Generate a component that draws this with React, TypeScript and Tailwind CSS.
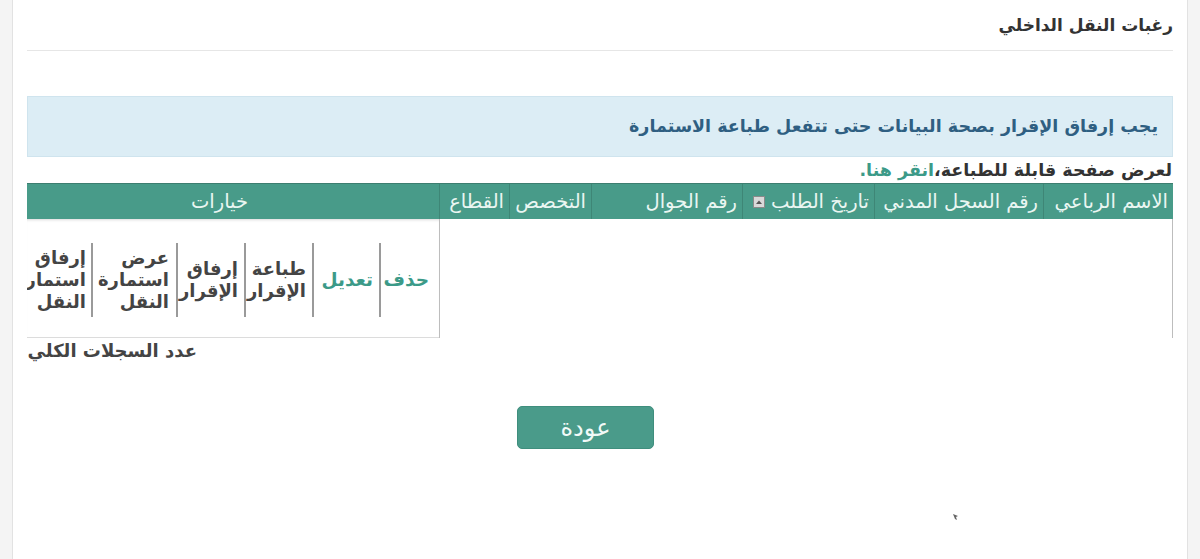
import React from "react";

const font = { fontFamily: "'DejaVu Sans', 'Noto Sans', sans-serif" };

const headCols: { label: string; w: string; sort?: boolean }[] = [
  { label: "الاسم الرباعي", w: "w-[130px]" },
  { label: "رقم السجل المدني", w: "w-[169px]" },
  { label: "تاريخ الطلب", w: "w-[132px]", sort: true },
  { label: "رقم الجوال", w: "w-[151px]" },
  { label: "التخصص", w: "w-[82px]" },
  { label: "القطاع", w: "w-[70px]" },
];

function SortIcon() {
  return (
    <span className="inline-flex items-center justify-center w-[12px] h-[12px] bg-[#d9d9d9] border border-[#8a8a8a] mr-[6px]">
      <svg width="8" height="6" viewBox="0 0 8 6">
        <path d="M1 5 L4 1.5 L7 5 Z" fill="#555" />
      </svg>
    </span>
  );
}

export default function App() {
  return (
    <div className="relative flex h-[559px] w-[1200px] bg-white overflow-hidden" style={font}>
      {/* left gutter */}
      <div className="w-[13px] shrink-0 bg-[#f4f4f4] border-r border-[#e2e2e2]" />

      {/* page body */}
      <div dir="rtl" className="flex-1 min-w-0 px-[14px] pt-[12px] text-[#444]">
        <h2 className="text-[17px] leading-[26px] font-bold text-[#333]">
          رغبات النقل الداخلي
        </h2>
        <div className="mt-[12px] border-t border-[#e6e6e6]" />

        {/* notice */}
        <div className="mt-[45px] h-[61px] flex items-center bg-[#dcedf5] border border-[#cfe4ee] pr-[14px] text-[#2f5f82] text-[17.5px] font-bold">
          يجب إرفاق الإقرار بصحة البيانات حتى تتفعل طباعة الاستمارة
        </div>

        <div className="h-[26px] flex items-center pr-[1px] text-[17.5px] font-bold text-[#333]">
          <span>
            لعرض صفحة قابلة للطباعة،<span className="text-[#3c9a88]">انقر هنا.</span>
          </span>
        </div>

        {/* table */}
        <div className="w-full min-w-0">
          <div className="flex h-[36px] bg-[#489b89] border-t border-[#3d7e70] text-[#eaf6f2] text-[19.5px]">
            {headCols.map((c) => (
              <div
                key={c.label}
                className={`${c.w} shrink-0 flex items-center pr-[5px] border-l border-[#3e8676] whitespace-nowrap`}
              >
                {c.label}
                {c.sort && <SortIcon />}
              </div>
            ))}
            <div className="flex-1 min-w-0 flex items-center justify-center pr-[27px]">خيارات</div>
          </div>

          <div className="flex h-[119px]">
            <div className="w-[734px] shrink-0 border-r border-l border-[#bdbdbd]" />
            <div className="flex-1 min-w-0 overflow-hidden border-b border-[#dcdcdc] shadow-[inset_0_3px_3px_-2px_rgba(0,0,0,0.15)]">
              <div className="flex items-center h-full pt-[4px] whitespace-nowrap text-[18px] font-bold leading-[22px]">
                <div className="w-[60px] shrink-0 h-[74px] flex items-center pr-[10px] border-l-2 border-[#9a9a9a] text-[#3c9a88] text-[18.5px]">
                  حذف
                </div>
                <div className="w-[67px] shrink-0 h-[74px] flex items-center pr-[6px] border-l-2 border-[#9a9a9a] text-[#3c9a88] text-[18.5px]">
                  تعديل
                </div>
                <div className="w-[68px] shrink-0 h-[74px] flex items-center pr-[6px] border-l-2 border-[#9a9a9a]">
                  <span>
                    طباعة
                    <br />
                    الإقرار
                  </span>
                </div>
                <div className="w-[68px] shrink-0 h-[74px] flex items-center pr-[6px] border-l-2 border-[#9a9a9a]">
                  <span>
                    إرفاق
                    <br />
                    الإقرار
                  </span>
                </div>
                <div className="w-[85px] shrink-0 h-[74px] flex items-center pr-[7px] border-l-2 border-[#9a9a9a]">
                  <span>
                    عرض
                    <br />
                    استمارة
                    <br />
                    النقل
                  </span>
                </div>
                <div className="w-[85px] shrink-0 h-[74px] flex items-center pr-[5px]">
                  <span>
                    إرفاق
                    <br />
                    استمارة
                    <br />
                    النقل
                  </span>
                </div>
              </div>
            </div>
          </div>
        </div>

        <div className="mr-auto w-[170px] overflow-hidden whitespace-nowrap h-[24px] flex items-center text-[18px] font-bold text-[#444]">
          عدد السجلات الكلي
        </div>

        <div className="mt-[44px] flex justify-center pr-[29px]">
          <button className="w-[137px] h-[43px] rounded-[5px] bg-[#4a9b8a] border border-[#3f8e7d] text-[#f2faf8] text-[24px]">
            عودة
          </button>
        </div>
      </div>

      {/* right gutter */}
      <div className="w-[13px] shrink-0 bg-[#f4f4f4] border-l border-[#e2e2e2]" />

      {/* pointer */}
      <svg className="absolute left-[952px] top-[513px]" width="8" height="8" viewBox="0 0 8 8">
        <path d="M1 1 L6 3 L4 4 L5 7 L3 6 Z" fill="#666" />
      </svg>
    </div>
  );
}
